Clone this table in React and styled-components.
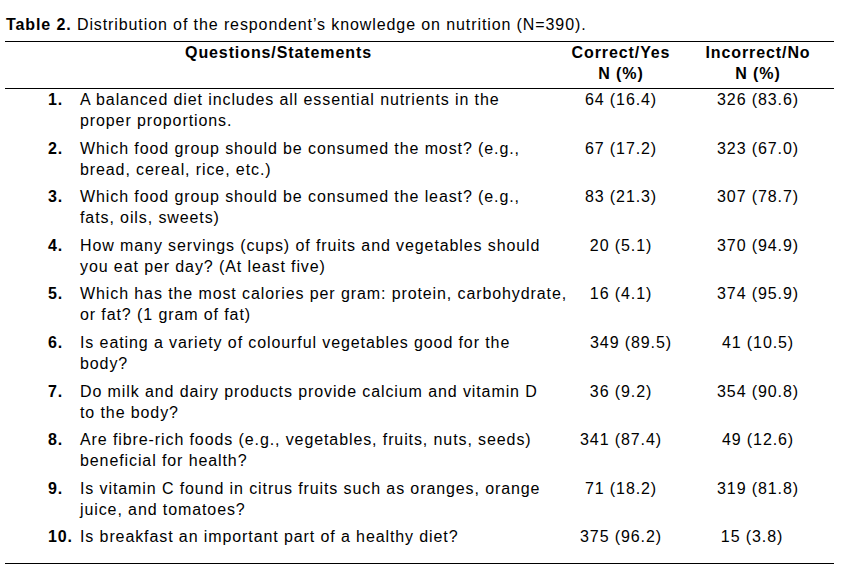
import React from 'react';
import styled, { createGlobalStyle } from 'styled-components';

const rows = [
  { n: '1.', q: ['A balanced diet includes all essential nutrients in the', 'proper proportions.'], yes: '64 (16.4)', no: '326 (83.6)' },
  { n: '2.', q: ['Which food group should be consumed the most? (e.g.,', 'bread, cereal, rice, etc.)'], yes: '67 (17.2)', no: '323 (67.0)' },
  { n: '3.', q: ['Which food group should be consumed the least? (e.g.,', 'fats, oils, sweets)'], yes: '83 (21.3)', no: '307 (78.7)' },
  { n: '4.', q: ['How many servings (cups) of fruits and vegetables should', 'you eat per day? (At least five)'], yes: '20 (5.1)', no: '370 (94.9)' },
  { n: '5.', q: ['Which has the most calories per gram: protein, carbohydrate,', 'or fat? (1 gram of fat)'], yes: '16 (4.1)', no: '374 (95.9)' },
  { n: '6.', q: ['Is eating a variety of colourful vegetables good for the', 'body?'], yes: '349 (89.5)', no: '41 (10.5)', shift: 10 },
  { n: '7.', q: ['Do milk and dairy products provide calcium and vitamin D', 'to the body?'], yes: '36 (9.2)', no: '354 (90.8)' },
  { n: '8.', q: ['Are fibre-rich foods (e.g., vegetables, fruits, nuts, seeds)', 'beneficial for health?'], yes: '341 (87.4)', no: '49 (12.6)' },
  { n: '9.', q: ['Is vitamin C found in citrus fruits such as oranges, orange', 'juice, and tomatoes?'], yes: '71 (18.2)', no: '319 (81.8)' },
  { n: '10.', q: ['Is breakfast an important part of a healthy diet?'], yes: '375 (96.2)', no: '15 (3.8)', nudge: -6 },
];

export default function App() {
  return (
    <>
      <GlobalStyle />
      <Page>
        <Caption>
          <b>Table 2.</b> Distribution of the respondent’s knowledge on nutrition (N=390).
        </Caption>
        <Table>
          <HeadRow>
            <HeadQuestion>Questions/Statements</HeadQuestion>
            <HeadCell>Correct/Yes<br />N (%)</HeadCell>
            <HeadCell>Incorrect/No<br />N (%)</HeadCell>
          </HeadRow>
          {rows.map((r) => (
            <Row key={r.n}>
              <Item>
                <Num>{r.n}</Num>
                <Question>
                  {r.q.map((line) => (
                    <div key={line}>{line}</div>
                  ))}
                </Question>
              </Item>
              <Value $shift={r.shift || 0}>{r.yes}</Value>
              <Value $shift={r.nudge || 0}>{r.no}</Value>
            </Row>
          ))}
        </Table>
      </Page>
    </>
  );
}

const GlobalStyle = createGlobalStyle`
  body {
    margin: 0;
    background: #fff;
  }
`;

const Page = styled.div`
  width: 847px;
  height: 579px;
  padding: 14px 0 0 5px;
  box-sizing: border-box;
  font-family: Arial, "Liberation Sans", sans-serif;
  font-size: 16px;
  line-height: 21px;
  letter-spacing: 0.9px;
  color: #000;
`;

const Caption = styled.div`
  padding-left: 1px;
  margin-bottom: 6px;
  white-space: nowrap;
`;

const Table = styled.div`
  width: 829px;
  border-top: 1px solid #000;
  border-bottom: 1px solid #000;
  padding-bottom: 9px;
`;

const HeadRow = styled.div`
  display: grid;
  grid-template-columns: 555px 122px 152px;
  border-bottom: 1px solid #000;
  padding-bottom: 4px;
  font-weight: bold;
`;

const HeadQuestion = styled.div`
  text-align: center;
  padding-right: 8px;
`;

const HeadCell = styled.div`
  text-align: center;
`;

const Row = styled.div`
  display: grid;
  grid-template-columns: 555px 122px 152px;
  padding-bottom: 6.6px;
`;

const Item = styled.div`
  display: flex;
  padding-left: 43px;
`;

const Num = styled.div`
  flex: none;
  width: 32px;
  font-weight: bold;
  white-space: nowrap;
`;

const Question = styled.div`
  white-space: nowrap;
`;

const Value = styled.div`
  text-align: center;
  padding-left: ${(p) => (p.$shift > 0 ? p.$shift * 2 : 0)}px;
  padding-right: ${(p) => (p.$shift < 0 ? -p.$shift * 2 : 0)}px;
  white-space: nowrap;
`;
